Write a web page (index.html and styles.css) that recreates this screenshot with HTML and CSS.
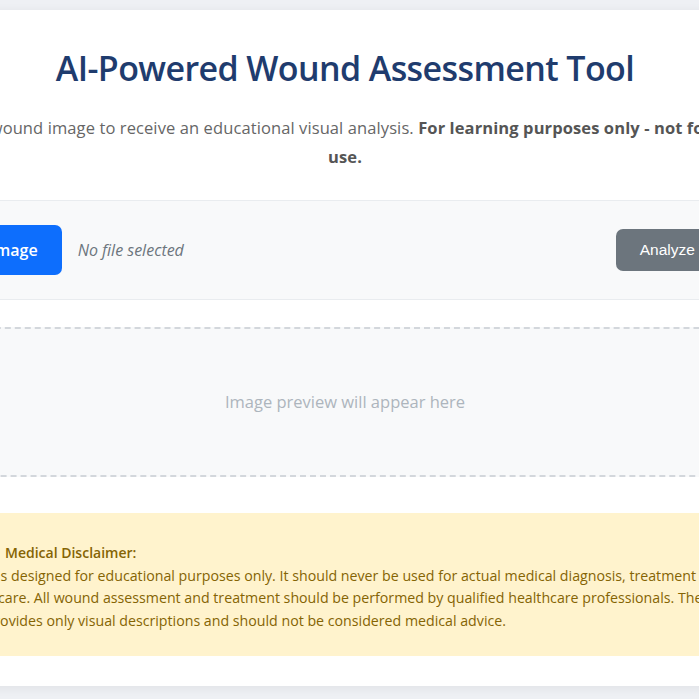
FILE: index.html
```html
<!DOCTYPE html>
<html lang="en">
<head>
    <meta charset="UTF-8">
    <meta name="viewport" content="width=device-width, initial-scale=1.0">
    <title>AI-Powered Wound Assessment Tool</title>
    <link rel="stylesheet" href="styles.css">
</head>
<body>
    <div class="page">
        <main class="card">
            <h1 class="title">AI-Powered Wound Assessment Tool</h1>
            <p class="intro">Upload a wound image to receive an educational visual analysis. <strong>For learning purposes only - not for clinical use.</strong></p>

            <section class="upload">
                <label for="woundImage" class="upload-btn">Select Image</label>
                <input type="file" id="woundImage" accept="image/*" hidden>
                <span class="file-name">No file selected</span>
                <button type="button" class="analyze-btn">Analyze Wound</button>
            </section>

            <div class="preview">
                <span>Image preview will appear here</span>
            </div>

            <div class="disclaimer">
                <p class="disclaimer-title">
                    <svg class="warn" viewBox="0 0 24 24" aria-hidden="true">
                        <path d="M12 2.5 1.5 21h21z" fill="#f5b301"/>
                        <rect x="11" y="9" width="2" height="6.5" fill="#5a4300"/>
                        <rect x="11" y="17" width="2" height="2" fill="#5a4300"/>
                    </svg><strong>Medical Disclaimer:</strong>
                </p>
                <p>It was designed for educational purposes only. It should never be used for actual medical diagnosis, treatment and care. All wound assessment and treatment should be performed by qualified healthcare professionals. The AI provides only visual descriptions and should not be considered medical advice.</p>
            </div>
        </main>
    </div>
</body>
</html>
```

FILE: styles.css
```css
html, body {
    margin: 0;
    height: 100%;
    overflow: hidden;
}
body {
    font-family: "Open Sans", "Noto Sans", sans-serif;
    background: #eef0f4;
    color: #333;
}
.page {
    display: flex;
    justify-content: center;
    padding: 10px 9px 0 0;
}
.card {
    flex: none;
    width: 880px;
    padding: 38px 40px 30px;
    background: white;
    border-radius: 12px;
    box-shadow: 0 2px 12px rgba(0,0,0,0.06);
}
.title {
    margin: 0 0 24px;
    text-align: center;
    font-size: 34px;
    font-weight: 600;
    line-height: 1.2;
    letter-spacing: -0.6px;
    color: #1f3c6e;
}
.intro {
    margin: 0;
    text-align: center;
    font-size: 16.5px;
    line-height: 29px;
    letter-spacing: 0.1px;
    color: #666;
}
.intro strong {
    color: #555;
}
.upload {
    display: flex;
    align-items: center;
    gap: 16px;
    margin-top: 29px;
    padding: 24px 12px 24px 10px;
    background: #f8f9fa;
    border: 1px solid #e9ecef;
    border-radius: 8px;
}
.upload-btn {
    padding: 14px 24px;
    font-size: 16px;
    font-weight: 600;
    line-height: 22px;
    color: white;
    background: #0d6efd;
    border-radius: 7px;
    cursor: pointer;
}
.file-name {
    font-size: 16px;
    font-style: italic;
    color: #6c757d;
}
.analyze-btn {
    margin-left: auto;
    padding: 12px 24px;
    font-family: "Liberation Sans", Arial, sans-serif;
    font-size: 15.5px;
    line-height: 18px;
    color: white;
    background: #6c757d;
    border: none;
    border-radius: 7px;
}
.preview {
    display: flex;
    align-items: center;
    justify-content: center;
    height: 146px;
    margin-top: 27px;
    background: #f8f9fa;
    border: 2px dashed #d3d7dc;
    border-radius: 10px;
    font-size: 16.5px;
    color: #adb5bd;
}
.disclaimer {
    margin-top: 36px;
    padding: 29px 64px 23px;
    background: #fff3cd;
    border-radius: 8px;
    font-size: 14.2px;
    line-height: 22.7px;
    color: #856404;
}
.disclaimer p {
    margin: 0;
    max-width: 739px;
}
.disclaimer-title {
    display: flex;
    align-items: center;
}
.disclaimer-title strong {
    font-size: 14px;
    font-weight: 600;
}
.warn {
    width: 22px;
    height: 22px;
    margin-right: 14px;
}
```
